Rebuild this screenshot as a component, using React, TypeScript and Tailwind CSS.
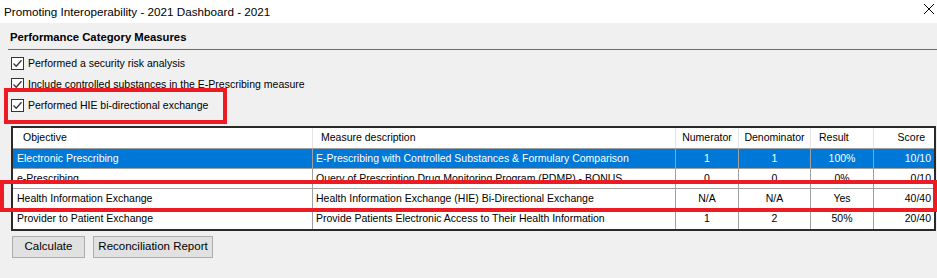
import React from 'react';

type Row = {
  objective: string;
  description: string;
  numerator: string;
  denominator: string;
  result: string;
  score: string;
  selected?: boolean;
};

const ROWS: Row[] = [
  {
    objective: 'Electronic Prescribing',
    description: 'E-Prescribing with Controlled Substances & Formulary Comparison',
    numerator: '1',
    denominator: '1',
    result: '100%',
    score: '10/10',
    selected: true,
  },
  {
    objective: 'e-Prescribing',
    description: 'Query of Prescription Drug Monitoring Program (PDMP) - BONUS',
    numerator: '0',
    denominator: '0',
    result: '0%',
    score: '0/10',
  },
  {
    objective: 'Health Information Exchange',
    description: 'Health Information Exchange (HIE) Bi-Directional Exchange',
    numerator: 'N/A',
    denominator: 'N/A',
    result: 'Yes',
    score: '40/40',
  },
  {
    objective: 'Provider to Patient Exchange',
    description: 'Provide Patients Electronic Access to Their Health Information',
    numerator: '1',
    denominator: '2',
    result: '50%',
    score: '20/40',
  },
];

const CHECKS = [
  'Performed a security risk analysis',
  'Include controlled substances in the E-Prescribing measure',
  'Performed HIE bi-directional exchange',
];

const cols = 'grid grid-cols-[300px_363px_63px_72px_63px_60px]';

const CheckBox: React.FC = () => (
  <span className="w-[13px] h-[13px] border border-[#333] bg-white flex items-center justify-center shrink-0">
    <svg width="11" height="11" viewBox="0 0 11 11" fill="none">
      <path d="M1.5 5.5 L4.2 8.2 L9.5 2.2" stroke="#333" strokeWidth="1.3" />
    </svg>
  </span>
);

const App: React.FC = () => {
  return (
    <div
      className="w-[937px] h-[278px] bg-[#f0f0f0] text-black overflow-hidden"
      style={{ fontFamily: '"Liberation Sans", Arial, sans-serif' }}
    >
      {/* title bar */}
      <div className="h-[23px] bg-white flex items-center justify-between pl-[4px] pr-[2px]">
        <span className="text-[11.7px] leading-none">Promoting Interoperability - 2021 Dashboard - 2021</span>
        <svg width="12" height="12" viewBox="0 0 12 12" className="mb-[6px]">
          <path d="M1 1 L11 11 M11 1 L1 11" stroke="#000" strokeWidth="1" />
        </svg>
      </div>

      <div className="pt-[8px]">
        <div className="pl-[10px] text-[11.3px] font-bold leading-[13px] h-[18px]">Performance Category Measures</div>
        <div className="ml-[8px] h-px bg-[#6d6d6d]" />

        <div className="pt-[7px] pl-[11px] flex flex-col">
          {CHECKS.map((label, i) => (
            <div key={label} className="relative h-[21px] flex items-start gap-[4px] text-[10.5px] leading-[13px]">
              <CheckBox />
              <span className="whitespace-nowrap">{label}</span>
              {i === 2 && (
                <div className="absolute left-[-7px] top-[-11px] w-[223px] h-[36px] border-4 border-[#ed1c24]" />
              )}
            </div>
          ))}
        </div>

        {/* table */}
        <div className="relative ml-[11px] mr-[1px] mt-[6px] border-2 border-[#2a2a2a] bg-white text-[10.5px]">
          <div className={`${cols} h-[21px] items-center border-b border-[#a0a0a0]`}>
            <div className="pl-[10px] border-r border-[#e5e5e5] h-full flex items-center">Objective</div>
            <div className="pl-[8px] border-r border-[#e5e5e5] h-full flex items-center">Measure description</div>
            <div className="border-r border-[#e5e5e5] h-full flex items-center justify-center">Numerator</div>
            <div className="border-r border-[#e5e5e5] h-full flex items-center justify-center">Denominator</div>
            <div className="pl-[8px] border-r border-[#e5e5e5] h-full flex items-center">Result</div>
            <div className="h-full flex items-center justify-end pr-[9px]">Score</div>
          </div>
          {ROWS.map((r, i) => (
            <div
              key={r.objective + i}
              className={`${cols} h-[20px] ${i < ROWS.length - 1 ? 'border-b border-[#a0a0a0]' : ''} ${
                r.selected ? 'bg-[#0078d7] text-white' : ''
              }`}
            >
              <div className="pl-[4px] border-r border-[#a0a0a0] flex items-center whitespace-nowrap overflow-hidden">{r.objective}</div>
              <div className="pl-[3px] border-r border-[#a0a0a0] flex items-center whitespace-nowrap overflow-hidden">{r.description}</div>
              <div className="border-r border-[#a0a0a0] flex items-center justify-center">{r.numerator}</div>
              <div className="border-r border-[#a0a0a0] flex items-center justify-center">{r.denominator}</div>
              <div className="border-r border-[#a0a0a0] flex items-center justify-center">{r.result}</div>
              <div className="flex items-center justify-end pr-[3px]">{r.score}</div>
            </div>
          ))}
          <div className="absolute left-[-13px] right-[-3px] top-[52px] h-[32px] border-4 border-[#ed1c24]" />
        </div>

        <div className="flex gap-[8px] pl-[12px] pt-[5px]">
          <button className="w-[73px] h-[22px] border border-[#adadad] bg-[#e1e1e1] text-[11.5px]">Calculate</button>
          <button className="w-[120px] h-[22px] border border-[#adadad] bg-[#e1e1e1] text-[11.5px]">Reconciliation Report</button>
        </div>
      </div>
    </div>
  );
};

export default App;
